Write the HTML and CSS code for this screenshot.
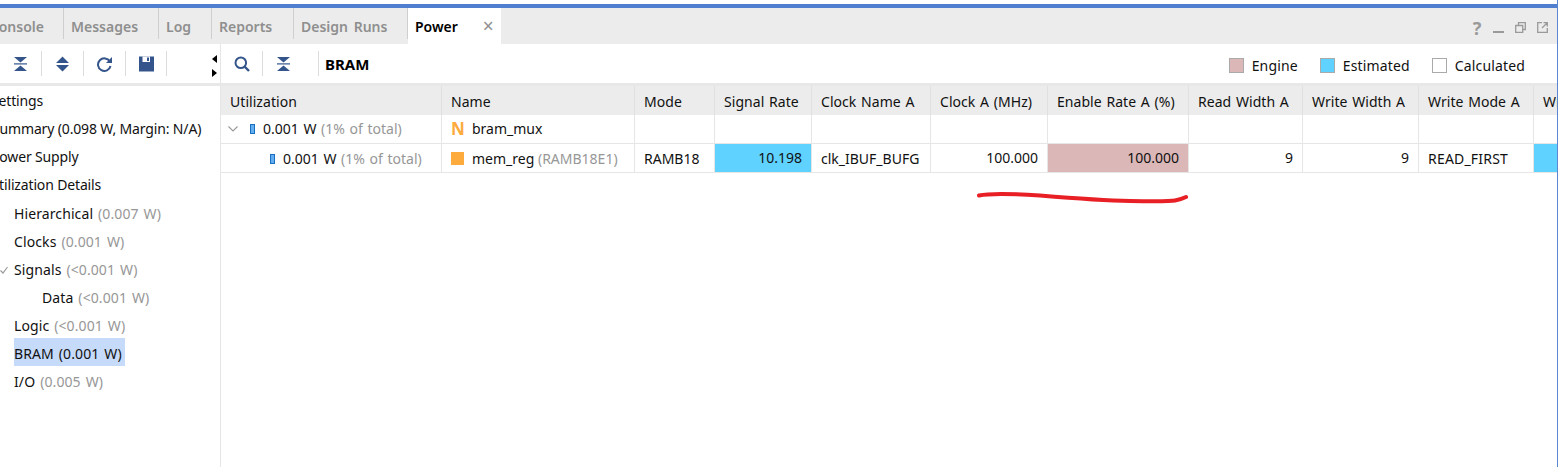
FILE: index.html
```html
<!DOCTYPE html>
<html lang="en">
<head>
<meta charset="utf-8">
<title>Power</title>
<link rel="stylesheet" href="styles.css">
</head>
<body>
<div class="window">
  <div class="tabbar">
    <div class="tabs">
      <div class="tab console">Tcl Console</div>
      <div class="tab messages">Messages</div>
      <div class="tab log">Log</div>
      <div class="tab reports">Reports</div>
      <div class="tab runs">Design Runs</div>
      <div class="tab active">Power<span class="close">×</span></div>
    </div>
    <div class="winicons">
      <span class="help">?</span>
      <svg width="11" height="11" viewBox="0 0 11 11"><path d="M0 10h11" stroke="#9a9a9a" stroke-width="2"/></svg>
      <svg width="11" height="11" viewBox="0 0 11 11"><path d="M3.500 3V0.700h6.800V7.500H8M0.700 3.500h7v6.800h-7z" fill="none" stroke="#9a9a9a" stroke-width="1.300"/></svg>
      <svg width="11" height="11" viewBox="0 0 11 11"><path d="M5 0.700H0.700v9.600h9.600V6M6.500 0.700h3.800v3.800M10 1L5 6" fill="none" stroke="#9a9a9a" stroke-width="1.300"/></svg>
    </div>
  </div>
  <div class="body">
    <aside class="left">
      <div class="toolbar lefttools">
        <svg class="tool collapse" width="13" height="16" viewBox="0 0 13 16"><path d="M0 7.900h13" stroke="#34558b" stroke-width="1.200"/><path d="M0 1h13L6.500 6.500zM0 15h13L6.500 9.500z" fill="#34558b"/></svg>
        <i class="sep"></i>
        <svg class="tool expand" width="13" height="16" viewBox="0 0 13 16"><path d="M6.500 0.500L13 7H0zM6.500 15.500L13 9H0z" fill="#34558b"/></svg>
        <i class="sep"></i>
        <svg class="tool refresh" width="15" height="16" viewBox="0 0 15 16"><path d="M12.800 5.500A6.300 6.300 0 1 0 13.500 10" fill="none" stroke="#34558b" stroke-width="2"/><path d="M15 1v6H9z" fill="#34558b"/></svg>
        <i class="sep"></i>
        <svg class="tool save" width="15" height="16" viewBox="0 0 15 16"><path d="M0 0.500h15v15H0z" fill="#34558b"/><path d="M3.500 0.500h7.500v5.500H3.500z" fill="#fff"/><path d="M8 1.500h2v3.500H8z" fill="#34558b"/></svg>
        <i class="sep"></i>
        <div class="grip"><i class="up"></i><i class="down"></i></div>
      </div>
      <ul class="nav">
        <li class="l0 settings">Settings</li>
        <li class="l0 summary">Summary (0.098 W, Margin: N/A)</li>
        <li class="l0 supply">Power Supply</li>
        <li class="l0 details">Utilization Details</li>
        <li class="l1">Hierarchical <span class="dim">(0.007 W)</span></li>
        <li class="l1">Clocks <span class="dim">(0.001 W)</span></li>
        <li class="l1 chk"><svg class="check" width="8" height="8" viewBox="0 0 8 8"><path d="M0.500 4.500L3 7L7.500 1" fill="none" stroke="#999" stroke-width="1.200"/></svg>Signals <span class="dim">(&lt;0.001 W)</span></li>
        <li class="l2">Data <span class="dim">(&lt;0.001 W)</span></li>
        <li class="l1">Logic <span class="dim">(&lt;0.001 W)</span></li>
        <li class="l1 selrow"><span class="sel">BRAM (0.001 W)</span></li>
        <li class="l1">I/O <span class="dim">(0.005 W)</span></li>
      </ul>
    </aside>
    <main class="right">
      <div class="toolbar righttools">
        <svg class="tool search" width="16" height="16" viewBox="0 0 16 16"><circle cx="6.800" cy="6.800" r="5.300" fill="none" stroke="#34558b" stroke-width="2"/><path d="M10.500 10.500L15 15" stroke="#34558b" stroke-width="2.400"/></svg>
        <i class="sep"></i>
        <svg class="tool collapse2" width="13" height="16" viewBox="0 0 13 16"><path d="M0 7.900h13" stroke="#34558b" stroke-width="1.200"/><path d="M0 1h13L6.500 6.500zM0 15h13L6.500 9.500z" fill="#34558b"/></svg>
        <i class="sep"></i>
        <b class="title">BRAM</b>
        <div class="legend">
          <span class="key"><i class="sw engine"></i>Engine</span>
          <span class="key"><i class="sw estimated"></i>Estimated</span>
          <span class="key"><i class="sw calculated"></i>Calculated</span>
        </div>
      </div>
      <div class="table">
        <div class="th">Utilization</div><div class="th">Name</div><div class="th">Mode</div><div class="th">Signal Rate</div><div class="th">Clock Name A</div><div class="th">Clock A (MHz)</div><div class="th">Enable Rate A (%)</div><div class="th">Read Width A</div><div class="th">Write Width A</div><div class="th">Write Mode A</div><div class="th">Write</div>

        <div class="td power"><svg class="chev" width="10" height="6" viewBox="0 0 10 6"><path d="M0.500 0.500L5 5L9.500 0.500" fill="none" stroke="#999" stroke-width="1.100"/></svg><i class="bar"></i>0.001 W&nbsp;<span class="dim">(1% of total)</span></div>
        <div class="td"><b class="nicon">N</b>bram_mux</div><div class="td"></div><div class="td"></div><div class="td"></div><div class="td"></div><div class="td"></div><div class="td"></div><div class="td"></div><div class="td"></div><div class="td"></div>

        <div class="td low power sub"><i class="bar"></i>0.001 W&nbsp;<span class="dim">(1% of total)</span></div>
        <div class="td low"><i class="cell-icon"></i>mem_reg&nbsp;<span class="dim">(RAMB18E1)</span></div>
        <div class="td low">RAMB18</div>
        <div class="td num blue">10.198</div>
        <div class="td low">clk_IBUF_BUFG</div>
        <div class="td num">100.000</div>
        <div class="td num pink">100.000</div>
        <div class="td num">9</div>
        <div class="td num">9</div>
        <div class="td low wide">READ_FIRST</div>
        <div class="td blue"></div>
      </div>
    </main>
  </div>
  <svg class="scribble" width="230" height="20" viewBox="970 186 230 20"><path d="M979 195.500C990 193 1010 193.500 1040 195.500C1070 198 1100 200.500 1130 201C1150 201.300 1170 201.500 1175 200.500C1180 199.500 1183 198.500 1186 197" fill="none" stroke="#e81f25" stroke-width="4" stroke-linecap="round"/></svg>
</div>
</body>
</html>
```
FILE: styles.css
```css
* { box-sizing: border-box; }
html, body { margin: 0; padding: 0; background: #fff; }
body { width: 1558px; height: 467px; overflow: hidden; font-family: "Noto Sans", "Open Sans", sans-serif; font-size: 14px; color: #111; }
.window { position: relative; width: 1558px; height: 467px; padding-top: 4px; overflow: hidden; border-right: 1px solid #5b86d0; }
.tabbar { display: flex; justify-content: space-between; height: 40px; background: #ececec; border-top: 4px solid #4f7fce; }
.tabs { display: flex; align-items: stretch; height: 36px; margin-left: -32px; }
.tab { display: flex; align-items: center; padding-left: 7px; color: #8f8f8f; font-weight: 600; font-size: 14px; position: relative; }
.tab::after { content: ""; position: absolute; right: 0; top: 0; height: 31px; width: 1px; background: #cfcfcf; }
.console { width: 96px; padding-left: 0; justify-content: flex-end; padding-right: 20px; }
.messages { width: 95px; }
.log { width: 53px; }
.reports { width: 82px; }
.runs { width: 114px; word-spacing: 2px; }
.active { width: 93px; background: #fff; color: #000; }
.active::after { display: none; }
.close { margin-left: 25px; color: #8f8f8f; font-weight: 400; font-size: 19px; line-height: 1; }
.winicons { display: flex; align-items: center; gap: 11px; padding: 3px 9px 0 0; height: 36px; }
.help { color: #9a9a9a; font-weight: 700; font-size: 18px; width: 10px; text-align: center; line-height: 1; }
.body { display: flex; height: 423px; }
.left { width: 221px; flex: none; border-right: 1px solid #e6e6e6; }
.right { flex: 1; min-width: 0; overflow: hidden; }
.toolbar { display: flex; align-items: center; height: 42px; border-bottom: 3px solid #e8e8e8; }
.sep { display: block; width: 1px; height: 25px; background: #dcdcdc; flex: none; }
.tool { flex: none; }
.lefttools { padding-left: 14px; }
.collapse { margin-right: 14px; }
.expand { margin: 0 14px; }
.refresh { margin: 0 13px; }
.save { margin: 0 12px 0 13px; }
.grip { display: flex; flex-direction: column; gap: 6px; margin: 5px 0 0 45px; }
.grip i { display: block; width: 0; height: 0; border-top: 4.5px solid transparent; border-bottom: 4.5px solid transparent; }
.grip .up { border-right: 5px solid #000; }
.grip .down { border-left: 5px solid #000; }
.nav { list-style: none; margin: 2px 0 0; padding: 0; white-space: nowrap; letter-spacing: 0.1px; word-spacing: 1.2px; }
.nav li { height: 28px; line-height: 28px; position: relative; }
.nav .l0 { line-height: 26px; letter-spacing: -0.15px; word-spacing: 0; }
.settings { margin-left: -9px; }
.summary { margin-left: -8px; }
.supply { margin-left: -9px; }
.details { margin-left: -11px; }
.l1 { padding-left: 14px; }
.l2 { padding-left: 42px; }
.check { position: absolute; left: 0; top: 10px; }
.dim { color: #979797; }
.selrow { display: flex; align-items: flex-start; }
.sel { display: block; height: 28px; margin-top: -2px; padding-right: 3px; line-height: 31px; background: #c6daf9; }
.righttools { padding-left: 13px; }
.search { margin-right: 12px; }
.collapse2 { margin: 0 28px 0 14px; }
.title { font-weight: 700; font-size: 15px; color: #000; margin-left: 6px; margin-top: 1px; }
.legend { display: flex; margin-left: auto; margin-top: 3px; padding-right: 32px; gap: 22px; letter-spacing: 0.15px; }
.key { display: flex; align-items: center; gap: 8px; }
.sw { display: block; width: 15px; height: 15px; border: 1px solid #aaa; }
.engine { background: #dbb7b7; }
.estimated { background: #5fd2ff; }
.calculated { background: #fff; }
.table { display: grid; grid-template-columns: 221px 193px 80px 97px 119px 117px 141px 114px 116px 115px 40px; grid-template-rows: 29px 29px 29px; width: 1337px; }
.th { background: #ececec; border-right: 1px solid #e0e0e0; padding: 1px 0 0 9px; line-height: 30px; white-space: nowrap; overflow: hidden; word-spacing: 1px; letter-spacing: 0.05px; }
.td { border-right: 1px solid #e6e6e6; border-bottom: 1px solid #e6e6e6; padding: 0 9px; line-height: 28px; white-space: nowrap; overflow: hidden; display: flex; align-items: center; }
.low { padding-top: 1px; }
.wide { letter-spacing: 0.2px; }
.power { word-spacing: 1px; }
.num { justify-content: flex-end; }
.blue { background: #5fd2ff; }
.pink { background: #dbb7b7; }
.td.sub { padding-left: 49px; }
.chev { margin: 0 12px 0 -2px; flex: none; }
.bar { display: block; width: 5px; height: 10px; margin-right: 8px; background: #63aef0; border: 1px solid #1a6fc0; flex: none; }
.nicon { display: block; width: 14px; margin-right: 7px; color: #fdab3d; font-size: 17px; font-weight: 700; line-height: 28px; flex: none; }
.cell-icon { display: block; width: 13px; height: 13px; margin-right: 8px; background: #fdab3d; flex: none; }
.scribble { position: absolute; left: 970px; top: 186px; }
```
